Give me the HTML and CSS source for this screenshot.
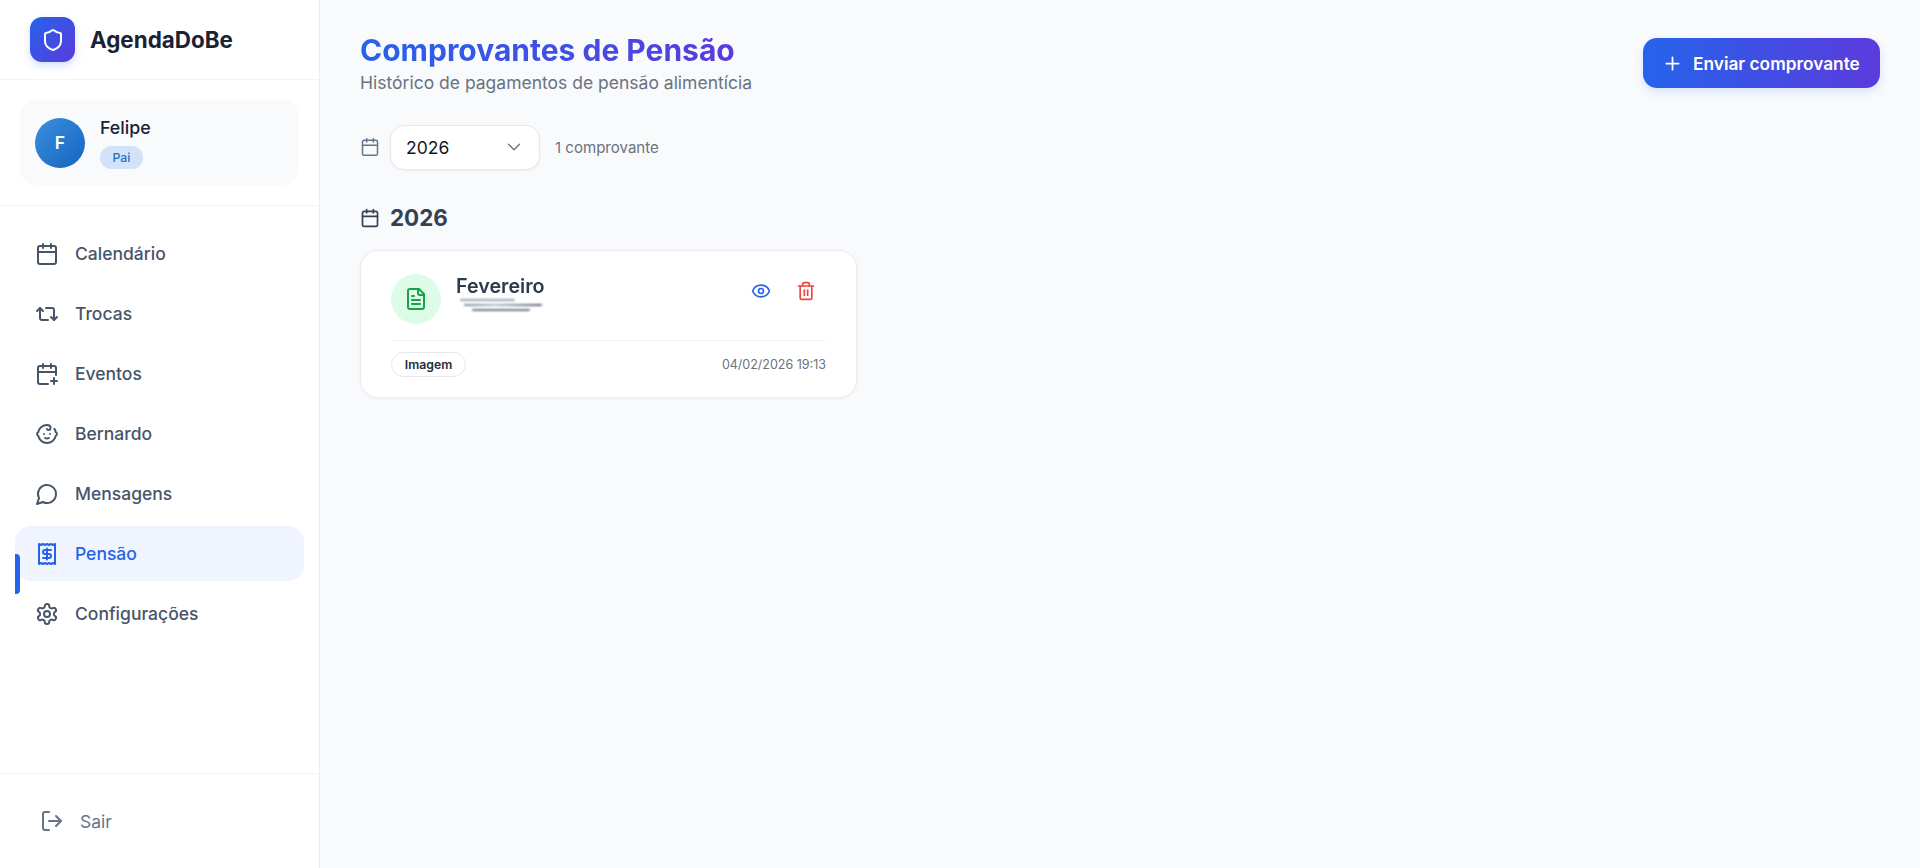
FILE: index.html
```html
<!DOCTYPE html>
<html lang="pt-BR">
<head>
<meta charset="utf-8">
<title>Comprovantes de Pensão</title>
<link rel="stylesheet" href="styles.css">
</head>
<body>
<div class="app">
  <aside class="sidebar">
    <div class="brand">
      <div class="logo">
        <svg class="logo-icon" viewBox="0 0 24 24"><path d="M20 13c0 5-3.500 7.500-7.660 8.950a1 1 0 0 1-.67-.01C7.500 20.500 4 18 4 13V6a1 1 0 0 1 1-1c2 0 4.500-1.200 6.240-2.720a1.170 1.170 0 0 1 1.520 0C14.510 3.810 17 5 19 5a1 1 0 0 1 1 1z"/></svg>
      </div>
      <span class="brand-name">AgendaDoBe</span>
    </div>
    <div class="user-wrap">
      <div class="user-card">
        <div class="avatar">F</div>
        <div class="user-info">
          <div class="user-name">Felipe</div>
          <span class="role">Pai</span>
        </div>
      </div>
    </div>
    <nav class="nav">
      <a class="nav-item">
        <svg class="nav-icon" viewBox="0 0 24 24"><path d="M8 2v4"/><path d="M16 2v4"/><rect x="3" y="4" width="18" height="18" rx="2"/><path d="M3 10h18"/></svg>
        <span>Calendário</span>
      </a>
      <a class="nav-item">
        <svg class="nav-icon" viewBox="0 0 24 24"><path d="m2 9 3-3 3 3"/><path d="M13 18H7a2 2 0 0 1-2-2V6"/><path d="m22 15-3 3-3-3"/><path d="M11 6h6a2 2 0 0 1 2 2v10"/></svg>
        <span>Trocas</span>
      </a>
      <a class="nav-item">
        <svg class="nav-icon" viewBox="0 0 24 24"><path d="M8 2v4"/><path d="M16 2v4"/><path d="M21 13V6a2 2 0 0 0-2-2H5a2 2 0 0 0-2 2v14a2 2 0 0 0 2 2h8"/><path d="M3 10h18"/><path d="M16 19h6"/><path d="M19 16v6"/></svg>
        <span>Eventos</span>
      </a>
      <a class="nav-item">
        <svg class="nav-icon" viewBox="0 0 24 24"><path d="M10 16c.5.300 1.200.500 2 .500s1.500-.200 2-.500"/><path d="M15 12h.01"/><path d="M19.380 6.813A9 9 0 0 1 20.800 10.200a2 2 0 0 1 0 3.600 9 9 0 0 1-17.600 0 2 2 0 0 1 0-3.600A9 9 0 0 1 12 3c2 0 3.500 1.100 3.500 2.500s-.900 2.500-2 2.500c-.800 0-1.500-.400-1.500-1"/><path d="M9 12h.01"/></svg>
        <span>Bernardo</span>
      </a>
      <a class="nav-item">
        <svg class="nav-icon" viewBox="0 0 24 24"><path d="M7.900 20A9 9 0 1 0 4 16.100L2 22Z"/></svg>
        <span>Mensagens</span>
      </a>
      <a class="nav-item active">
        <svg class="nav-icon" viewBox="0 0 24 24"><path d="M4 2v20l2-1 2 1 2-1 2 1 2-1 2 1 2-1 2 1V2l-2 1-2-1-2 1-2-1-2 1-2-1-2 1Z"/><path d="M16 8h-6a2 2 0 1 0 0 4h4a2 2 0 1 1 0 4H8"/><path d="M12 17.500v-11"/></svg>
        <span>Pensão</span>
      </a>
      <a class="nav-item">
        <svg class="nav-icon" viewBox="0 0 24 24"><path d="M12.220 2h-.440a2 2 0 0 0-2 2v.180a2 2 0 0 1-1 1.730l-.430.250a2 2 0 0 1-2 0l-.150-.080a2 2 0 0 0-2.730.730l-.220.380a2 2 0 0 0 .730 2.730l.150.100a2 2 0 0 1 1 1.720v.510a2 2 0 0 1-1 1.740l-.150.090a2 2 0 0 0-.730 2.730l.220.380a2 2 0 0 0 2.730.730l.150-.080a2 2 0 0 1 2 0l.430.250a2 2 0 0 1 1 1.730V20a2 2 0 0 0 2 2h.440a2 2 0 0 0 2-2v-.180a2 2 0 0 1 1-1.730l.430-.250a2 2 0 0 1 2 0l.150.080a2 2 0 0 0 2.730-.730l.220-.390a2 2 0 0 0-.730-2.730l-.150-.080a2 2 0 0 1-1-1.740v-.500a2 2 0 0 1 1-1.740l.150-.090a2 2 0 0 0 .730-2.730l-.220-.380a2 2 0 0 0-2.730-.730l-.150.080a2 2 0 0 1-2 0l-.430-.250a2 2 0 0 1-1-1.730V4a2 2 0 0 0-2-2z"/><circle cx="12" cy="12" r="3"/></svg>
        <span>Configurações</span>
      </a>
    </nav>
    <div class="sidebar-footer">
      <a class="logout">
        <svg class="nav-icon" viewBox="0 0 24 24"><path d="M9 21H5a2 2 0 0 1-2-2V5a2 2 0 0 1 2-2h4"/><path d="m16 17 5-5-5-5"/><path d="M21 12H9"/></svg>
        <span>Sair</span>
      </a>
    </div>
  </aside>

  <main class="main">
    <header class="page-header">
      <div>
        <h1 class="page-title">Comprovantes de Pensão</h1>
        <p class="page-sub">Histórico de pagamentos de pensão alimentícia</p>
      </div>
      <button class="primary-btn">
        <svg class="plus" viewBox="0 0 24 24"><path d="M5 12h14"/><path d="M12 5v14"/></svg>
        <span>Enviar comprovante</span>
      </button>
    </header>

    <div class="filter-row">
      <svg class="filter-icon" viewBox="0 0 24 24"><path d="M8 2v4"/><path d="M16 2v4"/><rect x="3" y="4" width="18" height="18" rx="2"/><path d="M3 10h18"/></svg>
      <div class="select">
        <span>2026</span>
        <svg class="chevron" viewBox="0 0 24 24"><path d="m6 9 6 6 6-6"/></svg>
      </div>
      <span class="count">1 comprovante</span>
    </div>

    <h2 class="year-heading">
      <svg class="year-icon" viewBox="0 0 24 24"><path d="M8 2v4"/><path d="M16 2v4"/><rect x="3" y="4" width="18" height="18" rx="2"/><path d="M3 10h18"/></svg>
      <span>2026</span>
    </h2>

    <article class="card">
      <div class="card-top">
        <div class="file-badge">
          <svg class="file-icon" viewBox="0 0 24 24"><path d="M15 2H6a2 2 0 0 0-2 2v16a2 2 0 0 0 2 2h12a2 2 0 0 0 2-2V7Z"/><path d="M14 2v4a2 2 0 0 0 2 2h4"/><path d="M10 9H8"/><path d="M16 13H8"/><path d="M16 17H8"/></svg>
        </div>
        <div class="card-text">
          <div class="card-title">Fevereiro</div>
          <div class="smear">
            <i class="smear-a"></i>
            <i class="smear-b"></i>
            <i class="smear-c"></i>
          </div>
        </div>
        <div class="card-actions">
          <svg class="eye" viewBox="0 0 24 24"><path d="M2.060 12.350a1 1 0 0 1 0-.700 10.750 10.750 0 0 1 19.880 0 1 1 0 0 1 0 .700 10.750 10.750 0 0 1-19.880 0"/><circle cx="12" cy="12" r="3"/></svg>
          <svg class="trash" viewBox="0 0 24 24"><path d="M3 6h18"/><path d="M19 6v14c0 1-1 2-2 2H7c-1 0-2-1-2-2V6"/><path d="M8 6V4c0-1 1-2 2-2h4c1 0 2 1 2 2v2"/><path d="M10 11v6"/><path d="M14 11v6"/></svg>
        </div>
      </div>
      <div class="card-bottom">
        <span class="tag">Imagem</span>
        <span class="date">04/02/2026 19:13</span>
      </div>
    </article>
  </main>
</div>
</body>
</html>
```

FILE: styles.css
```css
* { box-sizing: border-box; }
html, body { margin: 0; height: 100%; }
body { font-family: Inter, "Liberation Sans", sans-serif; background: #f8fafc; color: #1e293b; overflow: hidden; }
svg { fill: none; stroke: currentColor; stroke-width: 2; stroke-linecap: round; stroke-linejoin: round; flex: none; display: block; }
.app { display: flex; height: 868px; }

.sidebar { width: 320px; flex: none; background: #fff; border-right: 1px solid #e9edf2; display: flex; flex-direction: column; }
.brand { height: 80px; padding: 0 30px; display: flex; align-items: center; gap: 15px; border-bottom: 1px solid #f1f3f6; }
.logo { width: 45px; height: 45px; border-radius: 12px; background: linear-gradient(135deg, #2563eb, #5b3bdc); box-shadow: 0 4px 8px rgba(37, 99, 235, .2); display: flex; align-items: center; justify-content: center; color: #fff; }
.logo-icon { width: 24px; height: 24px; }
.brand-name { font-size: 22.400px; font-weight: 700; color: #1a2233; }

.user-wrap { padding: 20px 20px; border-bottom: 1px solid #f1f3f6; height: 126px; }
.user-card { height: 85px; background: #f8fafc; border-radius: 16px; padding: 0 15px; display: flex; align-items: center; gap: 15px; }
.avatar { width: 50px; height: 50px; border-radius: 50%; background: linear-gradient(135deg, #3b8ede, #1565c0); color: #fff; font-weight: 600; font-size: 17.500px; display: flex; align-items: center; justify-content: center; }
.user-info { display: flex; flex-direction: column; align-items: flex-start; gap: 6px; margin-top: -1px; }
.user-name { font-size: 17.800px; font-weight: 500; line-height: 25px; color: #1a2233; }
.role { font-size: 12.250px; font-weight: 500; line-height: 23px; padding: 0 12.500px; height: 23px; border-radius: 12px; background: #d2e3f9; color: #1f6fc4; }

.nav { flex: 1; padding: 20px 15px 0; display: flex; flex-direction: column; gap: 5px; }
.nav-item { position: relative; height: 55px; padding: 0 20px; border-radius: 16px; display: flex; align-items: center; gap: 16px; font-size: 17.500px; font-weight: 500; color: #475569; }
.nav-item.active { background: #eff4fe; color: #2563eb; }
.nav-item.active::before { content: ""; position: absolute; left: 0; top: 28px; width: 5px; height: 40px; background: #2563eb; border-radius: 0 4px 4px 0; }
.nav-icon { width: 24px; height: 24px; }

.sidebar-footer { height: 95px; border-top: 1px solid #f1f3f6; padding: 0 40px; display: flex; align-items: center; }
.logout { display: flex; align-items: center; gap: 16px; font-size: 17.500px; color: #64748b; }

.main { flex: 1; padding: 32px 40px; min-width: 0; }
.page-header { display: flex; justify-content: space-between; align-items: flex-start; height: 64px; margin-bottom: 29px; }
.page-title { margin: 0; font-size: 30px; line-height: 37px; font-weight: 700; background: linear-gradient(90deg, #2563eb, #5b3bdc); -webkit-background-clip: text; background-clip: text; color: transparent; width: max-content; }
.page-sub { margin: 0; font-size: 17.500px; line-height: 28px; color: #6b7280; }
.primary-btn { margin-top: 6px; height: 50px; width: 237px; padding: 0 0 0 19px; border: 0; border-radius: 14px; background: linear-gradient(90deg, #2563eb, #5b3bdc); color: #fff; font: 600 17.300px Inter, sans-serif; box-shadow: 0 4px 10px rgba(37, 99, 235, .15); display: flex; align-items: center; gap: 10px; }
.plus { width: 21px; height: 21px; }

.filter-row { display: flex; align-items: center; height: 44px; }
.filter-icon { width: 20px; height: 20px; color: #64748b; margin-right: 10px; stroke-width: 1.800; }
.select { width: 150px; height: 45px; background: #fff; border: 1px solid #e5e7eb; border-radius: 14px; box-shadow: 0 1px 3px rgba(15, 23, 42, .05); padding: 0 14px 0 15px; display: flex; align-items: center; justify-content: space-between; font-size: 17.500px; color: #111827; }
.chevron { width: 22px; height: 22px; color: #6b7280; stroke-width: 1.500; }
.count { margin-left: 15px; font-size: 15.050px; color: #6b7280; }

.year-heading { margin: 31px 0 14px; display: flex; align-items: center; gap: 10px; font-size: 22.400px; line-height: 36px; font-weight: 700; color: #334155; }
.year-icon { width: 20px; height: 20px; }

.card { width: 497px; height: 148px; background: #fff; border: 1px solid #e9edf2; border-radius: 18px; box-shadow: 0 1px 4px rgba(15, 23, 42, .05); padding: 23px 30px 0; }
.card-top { display: flex; align-items: flex-start; height: 67px; border-bottom: 1px solid #f1f3f6; }
.file-badge { width: 50px; height: 50px; border-radius: 50%; background: #dcfce7; color: #16a34a; display: flex; align-items: center; justify-content: center; }
.file-icon { width: 24px; height: 24px; }
.card-text { margin-left: 15px; flex: 1; }
.card-title { font-size: 19.700px; font-weight: 600; line-height: 24px; color: #2d3a4f; filter: blur(.3px); }
.smear { display: flex; flex-direction: column; gap: 3px; margin-top: 1px; filter: blur(1px); }
.smear i { display: block; height: 2px; border-radius: 1px; }
.smear-a { width: 55px; margin-left: 4px; background: #98a2b1; }
.smear-b { width: 78px; margin-left: 8px; background: linear-gradient(90deg, #7c8696, #b0b8c3 40%, #556173); }
.smear-c { width: 58px; margin-left: 16px; background: #6b7584; }
.card-actions { display: flex; gap: 25px; align-items: center; margin-top: 7px; margin-right: 10px; }
.eye { width: 20px; height: 20px; color: #2563eb; }
.trash { width: 20px; height: 20px; color: #ef4444; }
.card-bottom { display: flex; align-items: center; justify-content: space-between; height: 36px; margin-top: 5px; }
.tag { height: 25px; width: 75px; border: 1px solid #e5e7eb; border-radius: 13px; font-size: 12.250px; font-weight: 600; color: #1e293b; display: flex; align-items: center; justify-content: center; }
.date { font-size: 12.500px; color: #6b7280; }
```
